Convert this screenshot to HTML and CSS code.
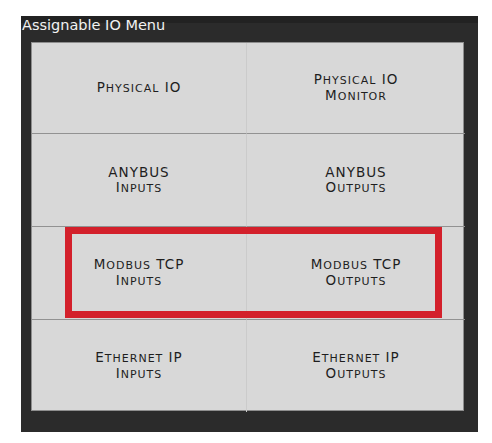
FILE: index.html
```html
<!DOCTYPE html>
<html>
<head>
<meta charset="utf-8">
<link rel="stylesheet" href="styles.css">
</head>
<body>
<div class="panel">
  <div class="title">Assignable IO Menu</div>
  <div class="grid">
    <div class="cell"><span>P<span class="sc">hysical</span> IO</span></div>
    <div class="cell right"><span>P<span class="sc">hysical</span> IO<br>M<span class="sc">onitor</span></span></div>
    <div class="cell"><span>ANYBUS<br>I<span class="sc">nputs</span></span></div>
    <div class="cell right"><span>ANYBUS<br>O<span class="sc">utputs</span></span></div>
    <div class="cell"><span>M<span class="sc">odbus</span> TCP<br>I<span class="sc">nputs</span></span></div>
    <div class="cell right"><span>M<span class="sc">odbus</span> TCP<br>O<span class="sc">utputs</span></span></div>
    <div class="cell last"><span>E<span class="sc">thernet</span> IP<br>I<span class="sc">nputs</span></span></div>
    <div class="cell right last"><span>E<span class="sc">thernet</span> IP<br>O<span class="sc">utputs</span></span></div>
    <div class="highlight"></div>
  </div>
</div>
</body>
</html>
```
FILE: styles.css
```css
html, body {
  margin: 0;
  padding: 0;
  background: #ffffff;
}
.panel {
  margin: 16px 0 0 21px;
  width: 457px;
  height: 416px;
  box-sizing: border-box;
  background: #2b2b2b;
  padding: 0 14px 0 10px;
  display: flex;
  flex-direction: column;
}
.title {
  height: 26px;
  margin: 0 -14px 0 -10px;
  padding-left: 1px;
  color: #f2f2f2;
  font-family: "DejaVu Sans", Verdana, sans-serif;
  font-size: 14.5px;
  line-height: 18px;
  background: linear-gradient(#222222 0, #222222 7px, #2b2b2b 7px);
}
.grid {
  position: relative;
  display: grid;
  grid-template-columns: 215px 218px;
  grid-template-rows: 91px 93px 93px 92px;
  background: #d8d8d8;
  border: 1px solid #8e8e8e;
  box-sizing: border-box;
  width: 433px;
  height: 369px;
}
.cell {
  display: flex;
  align-items: center;
  justify-content: center;
  text-align: center;
  font-family: "DejaVu Sans", Verdana, sans-serif;
  font-size: 13.5px;
  line-height: 15px;
  letter-spacing: 1px;
  color: #1e1e1e;
  border-bottom: 1px solid #929292;
  border-right: 1px solid #cbcbcb;
}
.sc {
  text-transform: uppercase;
  font-size: 11px;
}
.cell.right {
  border-right: none;
}
.cell.last {
  border-bottom: none;
}
.highlight {
  position: absolute;
  left: 33px;
  top: 184px;
  width: 377px;
  height: 91px;
  box-sizing: border-box;
  border: 7px solid #d3202b;
}
```
